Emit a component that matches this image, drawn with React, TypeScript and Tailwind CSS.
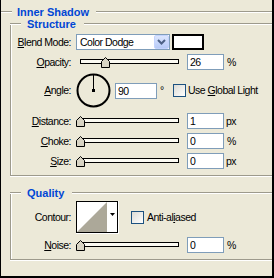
import { ReactNode } from 'react'

function Mn({ children }: { children: ReactNode }) {
  return <span className="underline underline-offset-[1px]">{children}</span>
}

function Label({ children }: { children: ReactNode }) {
  return <div className="w-[60px] shrink-0 text-right whitespace-nowrap">{children}</div>
}

// etched line: dark grey over white
function Etch({ className }: { className?: string }) {
  return (
    <div className={`flex flex-col ${className ?? ''}`}>
      <div className="h-px bg-[#9D9A8C]" />
      <div className="h-px bg-white" />
    </div>
  )
}

function Title({ children, pl, pr }: { children: ReactNode; pl: string; pr: string }) {
  return (
    <div className={`${pl} ${pr} shrink-0 font-bold text-[11px] tracking-normal text-[#0046D5] leading-[14px]`}>
      {children}
    </div>
  )
}

function Field({ value, wide }: { value: string; wide?: boolean }) {
  return (
    <div
      className={`${wide ? 'w-[42px]' : 'w-[37px]'} h-[16px] shrink-0 border border-[#7F9DB9] bg-white pl-[2px] leading-[14px]`}
    >
      {value}
    </div>
  )
}

function Thumb() {
  return (
    <svg width="9" height="11" viewBox="0 0 9 11">
      <path d="M4.5 0.5 L8.5 4.5 V10.5 H0.5 V4.5 Z" fill="#D8D4C4" stroke="#000" />
    </svg>
  )
}

function Slider({ value }: { value: number }) {
  return (
    <div className="relative w-[103px] h-[16px] shrink-0">
      <div className="absolute left-[4px] top-[5px] w-[99px] h-[5px] border border-black bg-[#FBFAF2]" />
      <div className="absolute top-[3px] flex" style={{ left: Math.round(value * 0.98) }}>
        <Thumb />
      </div>
    </div>
  )
}

function Check() {
  return (
    <div className="w-[13px] h-[13px] shrink-0 border border-[#1C5180] bg-gradient-to-br from-[#DCDBD5] to-white" />
  )
}

function Group({ title, className, children }: { title: string; className?: string; children: ReactNode }) {
  return (
    <div className={`ml-[9px] ${className ?? ''}`}>
      <div className="flex items-center h-[14px]">
        <Etch className="w-[11px]" />
        <Title pl="pl-[6px]" pr="pr-[8px]">
          {title}
        </Title>
        <Etch className="flex-1" />
      </div>
      <div className="-mt-[6px] border-l border-b border-[#9D9A8C] shadow-[inset_1px_0_0_#fff,0_1px_0_#fff]">
        {children}
      </div>
    </div>
  )
}

function NumRow({ label, value, unit, top }: { label: ReactNode; value: string; unit: string; top: string }) {
  return (
    <div className={`flex items-center h-[16px] ${top}`}>
      <Label>{label}</Label>
      <div className="ml-[5px]">
        <Slider value={0} />
      </div>
      <div className="ml-[8px]">
        <Field value={value} />
      </div>
      <span className={unit === '%' ? 'ml-[3px]' : 'ml-[2px]'}>{unit}</span>
    </div>
  )
}

export default function App() {
  return (
    <div className="w-[274px] h-[278px] overflow-hidden bg-[#ECE9D8] border-l border-r-2 border-b-2 border-black font-['Liberation_Sans',Arial,sans-serif] text-[10.5px] tracking-[-0.5px] text-black leading-none">
      <div className="flex items-center h-[14px] mt-[5px]">
        <Etch className="w-[11px]" />
        <Title pl="pl-[5px]" pr="pr-[7px]">Inner Shadow</Title>
        <Etch className="flex-1" />
      </div>

      <Group title="Structure" className="-mt-[2px]">
        <div className="pt-[9px] pb-[6px]">
          <div className="flex items-center h-[16px]">
            <Label>
              <Mn>B</Mn>lend Mode:
            </Label>
            <div className="ml-[5px] flex w-[94px] h-[16px] shrink-0 border border-[#7F9DB9] bg-white">
              <div className="flex-1 pl-[3px] leading-[14px] whitespace-nowrap">Color Dodge</div>
              <div className="w-[15px] h-[14px] flex items-center justify-center rounded-[2px] border border-[#C3D3FD] bg-gradient-to-b from-[#DCE6FE] to-[#B7CAF7]">
                <svg width="9" height="6" viewBox="0 0 9 6">
                  <path d="M1 1 L4.5 4.5 L8 1" fill="none" stroke="#4D6185" strokeWidth="2" />
                </svg>
              </div>
            </div>
            <div className="ml-[2px] w-[32px] h-[16px] shrink-0 border-2 border-black bg-white" />
          </div>

          <div className="flex items-center h-[16px] mt-[4px]">
            <Label>
              <Mn>O</Mn>pacity:
            </Label>
            <div className="ml-[5px]">
              <Slider value={26} />
            </div>
            <div className="ml-[8px]">
              <Field value="26" />
            </div>
            <span className="ml-[3px]">%</span>
          </div>

          <div className="flex items-center h-[35px] mt-[3px]">
            <Label>
              <Mn>A</Mn>ngle:
            </Label>
            <svg className="ml-[5px] shrink-0" width="35" height="35" viewBox="0 0 35 35">
              <circle cx="17.5" cy="17.5" r="16" fill="none" stroke="#000" strokeWidth="2" />
              <rect x="17" y="2" width="1" height="15" fill="#000" />
              <rect x="16" y="16" width="3" height="3" fill="#000" />
            </svg>
            <div className="ml-[4px]">
              <Field value="90" wide />
            </div>
            <span className="w-[16px] shrink-0 pl-[3px]">°</span>
            <Check />
            <span className="ml-[2px] whitespace-nowrap">
              Use <Mn>G</Mn>lobal Light
            </span>
          </div>

          <NumRow label={<><Mn>D</Mn>istance:</>} value="1" unit="px" top="mt-[5px]" />
          <NumRow label={<><Mn>C</Mn>hoke:</>} value="0" unit="%" top="mt-[4px]" />
          <NumRow label={<><Mn>S</Mn>ize:</>} value="0" unit="px" top="mt-[4px]" />
        </div>
      </Group>

      <Group title="Quality" className="mt-[10px]">
        <div className="pt-[7px] pb-[6px]">
          <div className="flex items-center h-[33px]">
            <Label>Contour:</Label>
            <div className="ml-[5px] flex w-[43px] h-[33px] shrink-0 border-r border-b border-white">
              <div className="flex flex-1 border border-black bg-white">
                <svg width="30" height="30" viewBox="0 0 30 30" className="shrink-0">
                  <polygon points="0,30 30,0 30,30" fill="#ACA899" />
                </svg>
                <div className="flex-1 flex justify-center pt-[11px]">
                  <svg width="5" height="3" viewBox="0 0 5 3">
                    <polygon points="0,0 5,0 2.5,3" fill="#000" />
                  </svg>
                </div>
              </div>
            </div>
            <div className="ml-[12px]">
              <Check />
            </div>
            <span className="ml-[3px] whitespace-nowrap">
              Anti-al<Mn>i</Mn>ased
            </span>
          </div>

          <NumRow label={<><Mn>N</Mn>oise:</>} value="0" unit="%" top="mt-[3px]" />
        </div>
      </Group>
    </div>
  )
}
